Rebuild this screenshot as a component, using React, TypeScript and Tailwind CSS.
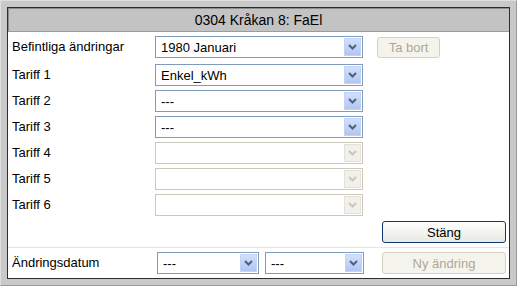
import React from "react";

const Chevron = ({ color }: { color: string }) => (
  <svg width="9" height="6" viewBox="0 0 9 6">
    <path d="M1 1 L4.5 4.5 L8 1" stroke={color} strokeWidth="2" fill="none" />
  </svg>
);

function Select({ value, className, disabled }: { value?: string; className: string; disabled?: boolean }) {
  return (
    <div
      className={
        "flex h-[22px] items-stretch bg-white border " +
        (disabled ? "border-[#cbc8bc] " : "border-[#7f9db9] ") +
        className
      }
    >
      <div className="flex-1 flex items-center pl-[5px] leading-none whitespace-nowrap overflow-hidden">{value}</div>
      {disabled ? (
        <div className="w-[17px] m-[1px] flex items-center justify-center bg-[#f1f0ea] border border-[#e4e2d8]">
          <Chevron color="#c9c7ba" />
        </div>
      ) : (
        <div className="w-[17px] m-[1px] flex items-center justify-center bg-gradient-to-b from-[#d3e0fb] to-[#b2c6f2] border border-[#c2d3f7]">
          <Chevron color="#4d6185" />
        </div>
      )}
    </div>
  );
}

function Label({ children, className }: { children: React.ReactNode; className: string }) {
  return <div className={"h-[22px] flex items-center pl-[4px] whitespace-nowrap " + className}>{children}</div>;
}

export default function App() {
  const tariffs: { label: string; value?: string; disabled?: boolean }[] = [
    { label: "Tariff 1", value: "Enkel_kWh" },
    { label: "Tariff 2", value: "---" },
    { label: "Tariff 3", value: "---" },
    { label: "Tariff 4", disabled: true },
    { label: "Tariff 5", disabled: true },
    { label: "Tariff 6", disabled: true },
  ];
  return (
    <div className="w-[517px] h-[286px] bg-[#c9c9c9] p-[6px] border border-t-[#dedede] border-l-[#dedede] border-r-[#9a9a9a] border-b-[#9a9a9a] font-['Liberation_Sans',Arial,sans-serif] text-[13px] text-black">
      <div className="h-full border border-[#2e2e2e] bg-white flex flex-col">
        <div className="h-[24px] shrink-0 bg-[#c3c3c3] border-b border-[#9c9c9c] shadow-[inset_1px_1px_0_#8c8c8c] flex items-center justify-center text-[14px] leading-none">
          0304 Kråkan 8: FaEl
        </div>
        <div className="flex h-[28px] pt-[4px] items-start shrink-0">
          <Label className="w-[147px]">Befintliga ändringar</Label>
          <Select value="1980 Januari" className="w-[208px]" />
          <div className="ml-[14px] mt-[1px] w-[63px] h-[21px] rounded-[3px] border border-[#d4d1c3] bg-[#f5f4ec] text-[#aca899] flex items-center justify-center leading-none">
            Ta bort
          </div>
        </div>
        {tariffs.map((t) => (
          <div key={t.label} className="flex h-[26px] pt-[4px] items-start shrink-0">
            <Label className="w-[147px]">{t.label}</Label>
            <Select value={t.value} disabled={t.disabled} className="w-[208px]" />
          </div>
        ))}
        <div className="flex h-[31px] pt-[5px] pr-[3px] justify-end items-start shrink-0">
          <div className="w-[124px] h-[22px] rounded-[3px] border border-[#0d3a6e] bg-gradient-to-b from-white to-[#e9e8e1] flex items-center justify-center leading-none">
            Stäng
          </div>
        </div>
        <div className="flex flex-1 pt-[4px] items-start border-t border-[#e4e4e4]">
          <Label className="w-[149px]">Ändringsdatum</Label>
          <Select value="---" className="w-[102px]" />
          <Select value="---" className="w-[99px] ml-[6px]" />
          <div className="ml-[18px] w-[124px] h-[22px] rounded-[3px] border border-[#d4d1c3] bg-[#f5f4ec] text-[#aca899] flex items-center justify-center leading-none">
            Ny ändring
          </div>
        </div>
      </div>
    </div>
  );
}
